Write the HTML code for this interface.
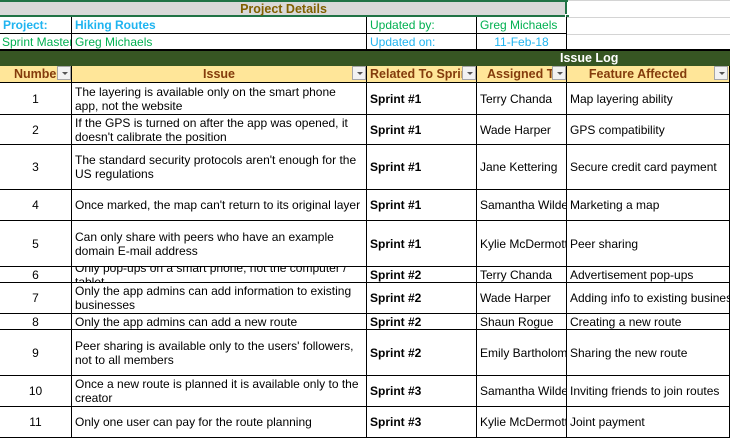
<!DOCTYPE html>
<html><head><style>
*{margin:0;padding:0;box-sizing:border-box}
body{width:730px;height:438px;overflow:hidden;background:#fff;font-family:"Liberation Sans",Arial,sans-serif;font-size:12px;color:#000;position:relative}
.a{position:absolute}
.c{position:absolute;display:flex;align-items:center;overflow:hidden;line-height:14px;padding-left:3px;border-right:1px solid #000;border-bottom:1px solid #000}
.ctr{justify-content:center;padding-left:0}
.b{font-weight:bold}
.h{position:absolute;background:#FFE699;color:#843C0C;font-weight:bold;font-size:12.5px;display:flex;align-items:center;justify-content:center;border-right:1px solid #000;border-bottom:1px solid #000;overflow:hidden;white-space:nowrap}
.f{position:absolute;width:14px;height:14px;top:66px;background:#f2f2f2;border:1px solid #a6a6a6}
.f:after{content:"";position:absolute;left:4px;top:5px;border-left:3px solid transparent;border-right:3px solid transparent;border-top:3px solid #555}
.g{position:absolute;left:567px;width:163px;height:1px;background:#d4d4d4}
</style></head><body>
<div class="a" style="left:0;top:0;width:730px;height:1px;background:#d4d4d4"></div>
<div class="a" style="left:0;top:0;width:568px;height:2px;background:#217346"></div>
<div class="a" style="left:0;top:2px;width:567px;height:15px;background:#D9D9D9;border-bottom:2px solid #217346;border-right:2px solid #217346"></div>
<div class="a" style="left:565px;top:14px;width:5px;height:5px;background:#217346;border:1px solid #fff"></div>
<div class="a" style="left:0;top:2px;width:567px;height:15px;line-height:15px;text-align:center;font-weight:bold;color:#806000;font-size:12.5px">Project Details</div>
<div class="g" style="top:17px"></div><div class="g" style="top:34px"></div>
<!-- project rows -->
<div class="c b" style="left:0;top:17px;width:72px;height:17px;color:#1FB4F0;white-space:nowrap">Project:</div>
<div class="c b" style="left:72px;top:17px;width:295px;height:17px;color:#1FB4F0">Hiking Routes</div>
<div class="c" style="left:367px;top:17px;width:110px;height:17px;color:#00B050">Updated by:</div>
<div class="c" style="left:477px;top:17px;width:90px;height:17px;color:#00B050">Greg Michaels</div>
<div class="c" style="left:0;top:34px;width:72px;height:16px;color:#00B050;white-space:nowrap;padding-left:2px">Sprint Master</div>
<div class="c" style="left:72px;top:34px;width:295px;height:16px;color:#00B050">Greg Michaels</div>
<div class="c" style="left:367px;top:34px;width:110px;height:16px;color:#1FB4F0">Updated on:</div>
<div class="c ctr" style="left:477px;top:34px;width:90px;height:16px;color:#1FB4F0">11-Feb-18</div>
<div class="a" style="left:0;top:49px;width:730px;height:17px;background:#375623;border-top:2px solid #000"></div>
<div class="a" style="left:560px;top:51px;width:60px;height:15px;line-height:15px;color:#fff;font-weight:bold;font-size:12.5px">Issue Log</div>
<!-- header -->
<div class="h" style="left:0;top:66px;width:72px;height:17px;justify-content:flex-start;padding-left:14px">Number</div>
<div class="h" style="left:72px;top:66px;width:295px;height:17px">Issue</div>
<div class="h" style="left:367px;top:66px;width:110px;height:17px;justify-content:flex-start;padding-left:3px">Related To Sprint</div>
<div class="h" style="left:477px;top:66px;width:90px;height:17px;justify-content:flex-start;padding-left:10px">Assigned To</div>
<div class="h" style="left:567px;top:66px;width:163px;height:17px;padding-right:20px">Feature Affected</div>
<div class="f" style="left:57px"></div><div class="f" style="left:352px"></div><div class="f" style="left:462px"></div><div class="f" style="left:552px"></div><div class="f" style="left:714px"></div>
<!-- rows -->
<div id="rows"></div>
<div class="c ctr" style="left:0;top:83px;width:72px;height:32px">1</div><div class="c" style="left:72px;top:83px;width:295px;height:32px">The layering is available only on the smart phone<br>app, not the website</div><div class="c b" style="left:367px;top:83px;width:110px;height:32px">Sprint #1</div><div class="c" style="left:477px;top:83px;width:90px;height:32px;white-space:nowrap">Terry Chanda</div><div class="c" style="left:567px;top:83px;width:163px;height:32px;white-space:nowrap">Map layering ability</div>
<div class="c ctr" style="left:0;top:115px;width:72px;height:30px">2</div><div class="c" style="left:72px;top:115px;width:295px;height:30px">If the GPS is turned on after the app was opened, it<br>doesn't calibrate the position</div><div class="c b" style="left:367px;top:115px;width:110px;height:30px">Sprint #1</div><div class="c" style="left:477px;top:115px;width:90px;height:30px;white-space:nowrap">Wade Harper</div><div class="c" style="left:567px;top:115px;width:163px;height:30px;white-space:nowrap">GPS compatibility</div>
<div class="c ctr" style="left:0;top:145px;width:72px;height:45px">3</div><div class="c" style="left:72px;top:145px;width:295px;height:45px">The standard security protocols aren't enough for the<br>US regulations</div><div class="c b" style="left:367px;top:145px;width:110px;height:45px">Sprint #1</div><div class="c" style="left:477px;top:145px;width:90px;height:45px;white-space:nowrap">Jane Kettering</div><div class="c" style="left:567px;top:145px;width:163px;height:45px;white-space:nowrap">Secure credit card payment</div>
<div class="c ctr" style="left:0;top:190px;width:72px;height:31px">4</div><div class="c" style="left:72px;top:190px;width:295px;height:31px;white-space:nowrap">Once marked, the map can't return to its original layer</div><div class="c b" style="left:367px;top:190px;width:110px;height:31px">Sprint #1</div><div class="c" style="left:477px;top:190px;width:90px;height:31px;white-space:nowrap">Samantha Wilder</div><div class="c" style="left:567px;top:190px;width:163px;height:31px;white-space:nowrap">Marketing a map</div>
<div class="c ctr" style="left:0;top:221px;width:72px;height:46px">5</div><div class="c" style="left:72px;top:221px;width:295px;height:46px">Can only share with peers who have an example<br>domain E-mail address</div><div class="c b" style="left:367px;top:221px;width:110px;height:46px">Sprint #1</div><div class="c" style="left:477px;top:221px;width:90px;height:46px;white-space:nowrap">Kylie McDermott</div><div class="c" style="left:567px;top:221px;width:163px;height:46px;white-space:nowrap">Peer sharing</div>
<div class="c ctr" style="left:0;top:267px;width:72px;height:16px">6</div><div class="c" style="left:72px;top:267px;width:295px;height:16px"><span style="white-space:nowrap">Only pop-ups on a smart phone, not the computer /<br>tablet</span></div><div class="c b" style="left:367px;top:267px;width:110px;height:16px">Sprint #2</div><div class="c" style="left:477px;top:267px;width:90px;height:16px;white-space:nowrap">Terry Chanda</div><div class="c" style="left:567px;top:267px;width:163px;height:16px;white-space:nowrap">Advertisement pop-ups</div>
<div class="c ctr" style="left:0;top:283px;width:72px;height:31px">7</div><div class="c" style="left:72px;top:283px;width:295px;height:31px">Only the app admins can add information to existing<br>businesses</div><div class="c b" style="left:367px;top:283px;width:110px;height:31px">Sprint #2</div><div class="c" style="left:477px;top:283px;width:90px;height:31px;white-space:nowrap">Wade Harper</div><div class="c" style="left:567px;top:283px;width:163px;height:31px;white-space:nowrap">Adding info to existing businesses</div>
<div class="c ctr" style="left:0;top:314px;width:72px;height:16px">8</div><div class="c" style="left:72px;top:314px;width:295px;height:16px">Only the app admins can add a new route</div><div class="c b" style="left:367px;top:314px;width:110px;height:16px">Sprint #2</div><div class="c" style="left:477px;top:314px;width:90px;height:16px;white-space:nowrap">Shaun Rogue</div><div class="c" style="left:567px;top:314px;width:163px;height:16px;white-space:nowrap">Creating a new route</div>
<div class="c ctr" style="left:0;top:330px;width:72px;height:46px">9</div><div class="c" style="left:72px;top:330px;width:295px;height:46px">Peer sharing is available only to the users' followers,<br>not to all members</div><div class="c b" style="left:367px;top:330px;width:110px;height:46px">Sprint #2</div><div class="c" style="left:477px;top:330px;width:90px;height:46px;white-space:nowrap">Emily Bartholomew</div><div class="c" style="left:567px;top:330px;width:163px;height:46px;white-space:nowrap">Sharing the new route</div>
<div class="c ctr" style="left:0;top:376px;width:72px;height:31px">10</div><div class="c" style="left:72px;top:376px;width:295px;height:31px">Once a new route is planned it is available only to the<br>creator</div><div class="c b" style="left:367px;top:376px;width:110px;height:31px">Sprint #3</div><div class="c" style="left:477px;top:376px;width:90px;height:31px;white-space:nowrap">Samantha Wilder</div><div class="c" style="left:567px;top:376px;width:163px;height:31px;white-space:nowrap">Inviting friends to join routes</div>
<div class="c ctr" style="left:0;top:407px;width:72px;height:31px">11</div><div class="c" style="left:72px;top:407px;width:295px;height:31px">Only one user can pay for the route planning</div><div class="c b" style="left:367px;top:407px;width:110px;height:31px">Sprint #3</div><div class="c" style="left:477px;top:407px;width:90px;height:31px;white-space:nowrap">Kylie McDermott</div><div class="c" style="left:567px;top:407px;width:163px;height:31px;white-space:nowrap">Joint payment</div>
</body></html>
